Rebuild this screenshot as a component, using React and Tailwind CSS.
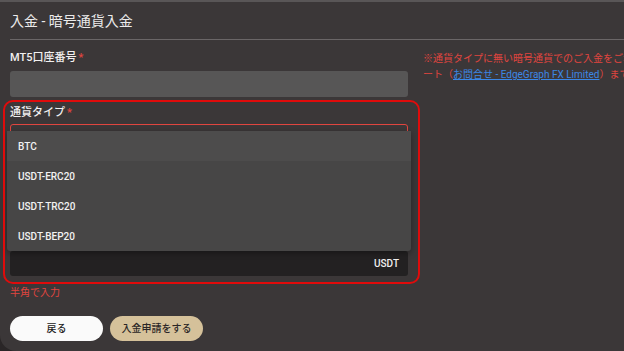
const font = { fontFamily: "Roboto, 'Noto Sans CJK JP', sans-serif" }

const options = ['BTC', 'USDT-ERC20', 'USDT-TRC20', 'USDT-BEP20']

const Label = ({ children }) => (
  <div className="h-[14px] flex items-center text-[11px] font-medium text-[#f2f0f0] leading-[14px]">
    {children}
    <span className="text-[#e0453f] ml-[2px]">*</span>
  </div>
)

export default function App() {
  return (
    <div className="w-[624px] h-[351px] overflow-hidden bg-[#2a2627]" style={font}>
      <div className="relative w-full h-full bg-[#3b3738] border-t-2 border-[#595657] rounded-bl-[16px] overflow-hidden">
        {/* header */}
        <div className="h-[38px] ml-[10px] flex items-center border-b border-[#6a6667]">
          <h1 className="text-[14px] text-[#ecebeb] leading-none">入金 - 暗号通貨入金</h1>
        </div>

        <div className="flex pl-[10px] pt-[11px]">
          {/* form column */}
          <div className="w-[398px] flex-shrink-0 flex flex-col">
            <Label>MT5口座番号</Label>
            <div className="mt-[6px] h-[26px] rounded-[3px] bg-[#575656]" />

            <div className="mt-[9px]">
              <Label>通貨タイプ</Label>
            </div>
            <div className="relative mt-[4px] h-[26px] rounded-[3px] border border-[#e0453f] bg-[#3b3738]" />

            <div className="mt-[101px] h-[25px] rounded-[3px] bg-[#232122] flex items-center justify-end pr-[9px] text-[10px] font-medium text-[#f0f0f0]">
              USDT
            </div>

            <p className="mt-[10px] h-[14px] text-[10px] leading-[14px] text-[#e0453f]">半角で入力</p>

            <div className="mt-[16px] flex gap-[7px]">
              <button className="w-[93px] h-[25px] rounded-full bg-[#fafafa] text-[10px] text-[#222] font-medium">戻る</button>
              <button className="w-[93px] h-[25px] rounded-full bg-[#d5c19a] text-[10px] text-[#2a2626] font-medium">入金申請をする</button>
            </div>
          </div>

          {/* notice column */}
          <div className="ml-[15px] text-[10px] leading-[16px] text-[#e0453f] whitespace-nowrap">
            <p>※通貨タイプに無い暗号通貨でのご入金をご希望の場合はサポ</p>
            <p>
              ート（<span className="text-[#3b87e6] underline">お問合せ - EdgeGraph FX Limited</span>）までご連絡ください。
            </p>
          </div>
        </div>

        {/* dropdown menu */}
        <div className="absolute left-[7px] top-[129px] w-[404px] bg-[#474646] rounded-[3px] shadow-[0_2px_6px_rgba(0,0,0,0.35)] flex flex-col">
          {options.map((o, i) => (
            <div
              key={o}
              className={`h-[30px] flex items-center pl-[11px] text-[10px] font-medium text-[#f2f2f2] ${i === 0 ? 'bg-[#4d4c4c]' : ''}`}
            >
              {o}
            </div>
          ))}
        </div>

        {/* highlight */}
        <div className="absolute left-[3px] top-[98px] w-[417px] h-[184px] border-2 border-[#e00b0b] rounded-[10px] pointer-events-none" />
      </div>
    </div>
  )
}
